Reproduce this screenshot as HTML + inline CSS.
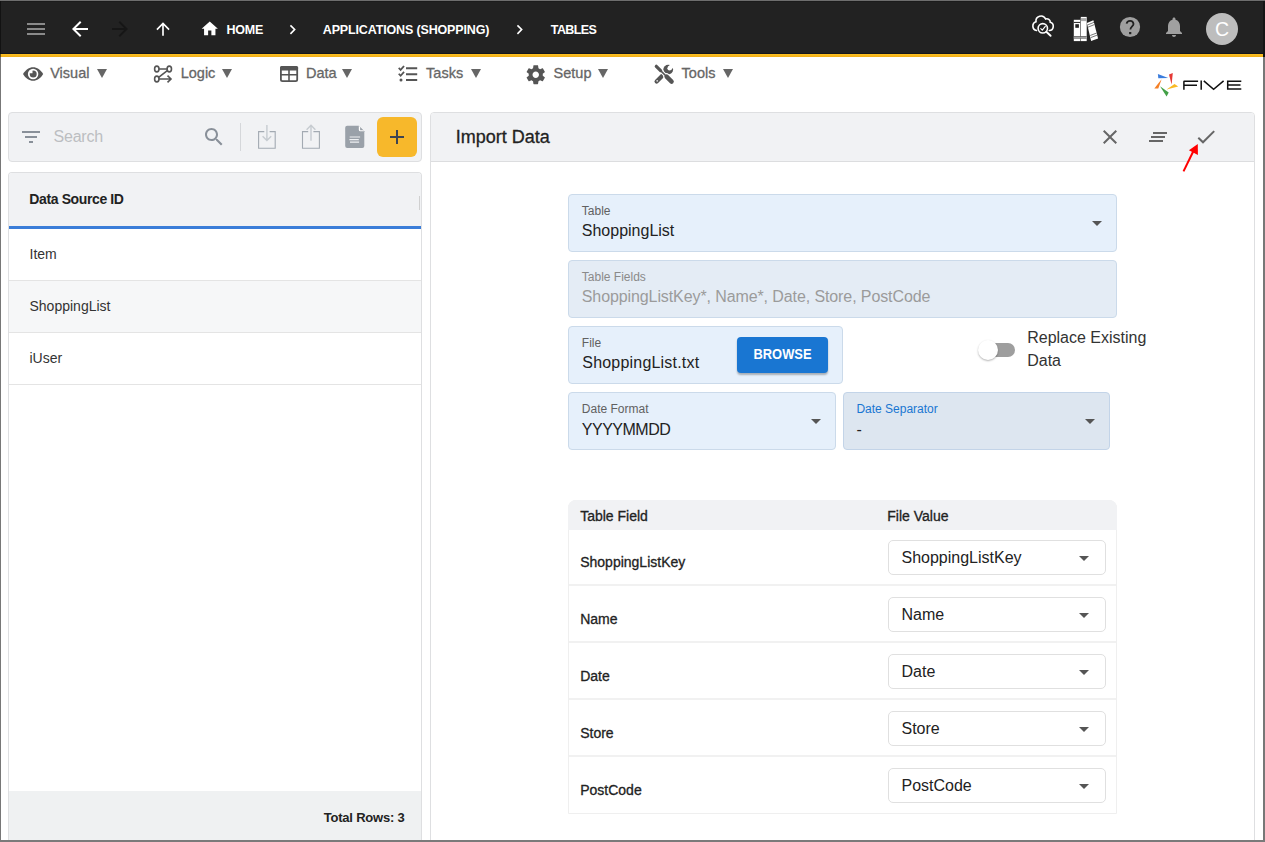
<!DOCTYPE html>
<html><head><meta charset="utf-8">
<style>
*{box-sizing:border-box;margin:0;padding:0}
html,body{width:1265px;height:842px;overflow:hidden;background:#fff}
body{position:relative;font-family:"Liberation Sans",sans-serif;color:#222}
.a{position:absolute}
.t{position:absolute;white-space:nowrap;line-height:1}
.m{-webkit-text-stroke:0.3px currentColor}
svg{position:absolute;overflow:visible}
</style></head><body>

<!-- ============ HEADER ============ -->
<div class="a" style="left:0;top:0;width:1265px;height:54px;background:#222"></div>
<div class="a" style="left:0;top:0;width:1265px;height:1px;background:#6e6e6e"></div>
<div class="a" style="left:0;top:1px;width:1265px;height:1px;background:#1c1c1c"></div>
<div class="a" style="left:0;top:53px;width:1265px;height:1px;background:#14171c"></div>
<div class="a" style="left:0;top:54px;width:1265px;height:3px;background:linear-gradient(#fec225,#f0ae17)"></div>

<!-- header icons -->
<svg style="left:24px;top:17px" width="24" height="24" viewBox="0 0 24 24"><path fill="#8a8a8a" d="M3 18h18v-2H3v2zm0-5h18v-2H3v2zm0-7v2h18V6H3z"/></svg>
<svg style="left:68px;top:17px" width="24" height="24" viewBox="0 0 24 24"><path fill="#fff" d="M20 11H7.83l5.59-5.59L12 4l-8 8 8 8 1.41-1.41L7.83 13H20v-2z"/></svg>
<svg style="left:108px;top:17px" width="24" height="24" viewBox="0 0 24 24"><path fill="#161616" d="M12 4l-1.41 1.41L16.17 11H4v2h12.17l-5.58 5.59L12 20l8-8z"/></svg>
<svg style="left:153px;top:19px" width="20" height="20" viewBox="0 0 24 24"><path fill="#fff" d="M4 12l1.41 1.41L11 7.83V20h2V7.83l5.58 5.59L20 12l-8-8-8 8z"/></svg>
<svg style="left:200.3px;top:19.1px" width="19.5" height="19.5" viewBox="0 0 24 24"><path fill="#fff" d="M10 20v-6h4v6h5v-8h3L12 3 2 12h3v8z"/></svg>
<div class="t" style="left:226.5px;top:24px;font-size:12.5px;font-weight:700;color:#fff;letter-spacing:-0.2px">HOME</div>
<svg style="left:283.1px;top:19.6px" width="19.2" height="19.2" viewBox="0 0 24 24"><path fill="#fff" d="M10 6L8.59 7.41 13.17 12l-4.58 4.59L10 18l6-6z"/></svg>
<div class="t" style="left:322.8px;top:24px;font-size:12.5px;font-weight:700;color:#fff;letter-spacing:-0.15px">APPLICATIONS (SHOPPING)</div>
<svg style="left:510.3px;top:19.6px" width="19.2" height="19.2" viewBox="0 0 24 24"><path fill="#fff" d="M10 6L8.59 7.41 13.17 12l-4.58 4.59L10 18l6-6z"/></svg>
<div class="t" style="left:550.8px;top:24px;font-size:12.5px;font-weight:700;color:#fff;letter-spacing:-0.6px">TABLES</div>

<!-- right header icons -->
<svg style="left:1028px;top:12px" width="30" height="30" viewBox="1028 12 30 30"><g fill="none" stroke="#fff" stroke-width="1.6" stroke-linecap="round"><path d="M1036.5 30.5A4.5 4.5 0 0 1 1036 21.8A5.05 5.05 0 0 1 1045.6 19A3.5 3.5 0 0 1 1050.3 22.3A4.2 4.2 0 0 1 1049.3 30.5"/><circle cx="1042.8" cy="28.3" r="4.7"/><path d="M1046.3 31.7L1050.6 35.8" stroke-width="1.9"/><path d="M1040.8 28.7L1042.3 30.2L1045.3 26.3" stroke-width="1.15"/></g></svg>
<svg style="left:1070px;top:12px" width="32" height="32" viewBox="1070 12 32 32">
<rect x="1073.8" y="19.8" width="6.5" height="21.3" fill="#fff"/>
<rect x="1073.8" y="21.9" width="6.5" height="1.1" fill="#333"/>
<rect x="1075.3" y="24.2" width="3.6" height="3.6" fill="#222"/>
<rect x="1080.8" y="16.9" width="5.9" height="24.2" fill="#fff"/>
<rect x="1080.8" y="18.1" width="5.9" height="3" fill="#aaa"/>
<rect x="1073.8" y="36" width="12.9" height="0.8" fill="#555"/>
<rect x="1073.8" y="37.1" width="12.9" height="1.1" fill="#999"/>
<rect x="1073.8" y="38.4" width="12.9" height="0.6" fill="#666"/>
<polygon points="1086.9,23 1093.4,20.2 1098.1,38.6 1091.1,40.9" fill="#fff"/>
<path d="M1087.5 25L1094 22.3M1088 27.2L1094.5 24.5M1090.2 35.5L1096.7 33M1090.7 37.6L1097.2 35.1" stroke="#555" stroke-width="0.8"/>
</svg>
<svg style="left:1115px;top:12px" width="30" height="30" viewBox="1115 12 30 30"><circle cx="1130" cy="27" r="10.1" fill="#a0a0a0"/><path d="M1126.6 23.6A3.5 3.5 0 0 1 1133.5 23.9C1133.5 26.2 1130.4 26.6 1130.4 29.6" fill="none" stroke="#222" stroke-width="1.8"/><rect x="1129.1" y="32" width="2.2" height="2.2" fill="#222"/></svg>
<svg style="left:1162px;top:14.5px" width="24" height="24" viewBox="0 0 24 24"><path fill="#a0a0a0" d="M12 22c1.1 0 2-.9 2-2h-4c0 1.1.89 2 2 2zm6-6v-5c0-3.07-1.64-5.64-4.5-6.32V4c0-.83-.67-1.5-1.5-1.5s-1.5.67-1.5 1.5v.68C7.630 5.36 6 7.92 6 11v5l-2 2v1h16v-1l-2-2z"/></svg>
<div class="a" style="left:1206px;top:13px;width:32px;height:32px;border-radius:50%;background:#bdbdbd"></div>
<div class="t" style="left:1206px;top:19.5px;width:32px;text-align:center;font-size:19.5px;color:#fff">C</div>

<!-- ============ NAV ============ -->
<svg style="left:1150px;top:68px" width="95" height="32" viewBox="1150 68 95 32">
<polygon points="1157.9,74.1 1158.3,78.3 1168.2,77.9" fill="#3b7ddd"/>
<polygon points="1169,74.5 1172.8,72.9 1171.6,84.5" fill="#e53935"/>
<polygon points="1166.6,89.5 1174.5,83.9 1178.2,86.4" fill="#f9b924"/>
<polygon points="1160,86.2 1168.7,92.4 1166.6,96.5" fill="#43a047"/>
<polygon points="1154.3,88.6 1161.6,79.3 1158.3,88.6" fill="#f57f25"/>
<g fill="none" stroke="#111" stroke-width="1.5">
<path d="M1198.1 81.2H1184.4Q1183.9 81.2 1183.9 81.8V89.7M1183.9 85.3H1197"/>
<path d="M1201.2 80.5V89.7"/>
<path d="M1203.8 80.9L1213.6 89.3L1223.6 80.9"/>
<path d="M1241.3 81.2H1227.7V89H1241.3M1227.7 85.1H1240.5"/>
</g>
</svg>

<svg style="left:18px;top:60px" width="30" height="28" viewBox="18 60 30 28"><path d="M23 74C25.6 69.6 29.2 67.2 33.1 67.2S40.6 69.6 43.2 74C40.6 78.4 37 80.8 33.1 80.8S25.6 78.4 23 74Z" fill="#555"/><circle cx="33.1" cy="74" r="5.2" fill="#fff"/><circle cx="33.2" cy="74.1" r="3.5" fill="#555"/><path d="M32.5 73.3H29.3A3.2 3.2 0 0 1 32.5 70.1Z" fill="#fff"/></svg>
<div class="t m" style="left:50.2px;top:65.5px;font-size:14.5px;color:#666">Visual</div>
<div class="a" style="left:97.2px;top:69.2px;width:0;height:0;border-left:5.1px solid transparent;border-right:5.1px solid transparent;border-top:9px solid #666"></div>

<svg style="left:148px;top:60px" width="30" height="28" viewBox="148 60 30 28"><g fill="none" stroke="#555" stroke-width="1.6"><ellipse cx="156.8" cy="69" rx="2.2" ry="2.9"/><ellipse cx="169.3" cy="69" rx="2.2" ry="2.9"/><ellipse cx="156.8" cy="79" rx="2.2" ry="2.9"/><path d="M159 69H167.1M167.3 70.6L158.6 77.4M159 79H171M167.5 75.6L171 79L167.5 82.4"/></g></svg>
<div class="t m" style="left:180.7px;top:65.5px;font-size:14.5px;color:#666">Logic</div>
<div class="a" style="left:222px;top:69.2px;width:0;height:0;border-left:5.1px solid transparent;border-right:5.1px solid transparent;border-top:9px solid #666"></div>

<svg style="left:275px;top:60px" width="30" height="28" viewBox="275 60 30 28"><rect x="280.9" y="66.9" width="16.3" height="14.2" rx="1.6" fill="none" stroke="#555" stroke-width="1.8"/><rect x="280" y="66" width="18.1" height="4.4" rx="1.6" fill="#555"/><path d="M289 69V81M280.5 74.8H297.6" stroke="#555" stroke-width="1.6"/></svg>
<div class="t m" style="left:306px;top:65.5px;font-size:14.5px;color:#666">Data</div>
<div class="a" style="left:341.5px;top:69.2px;width:0;height:0;border-left:5.1px solid transparent;border-right:5.1px solid transparent;border-top:9px solid #666"></div>

<svg style="left:394px;top:60px" width="30" height="28" viewBox="394 60 30 28"><g fill="none" stroke="#555" stroke-width="1.7" stroke-linecap="square"><path d="M399.3 68.5L400.6 69.9L403.5 66.6M399.3 74.4L400.6 75.8L403.5 72.5"/></g><circle cx="401" cy="80" r="1.5" fill="#555"/><path d="M406 68.3H417.2M406 74.2H417.2M406 80H417.2" stroke="#555" stroke-width="2"/></svg>
<div class="t m" style="left:426.1px;top:65.5px;font-size:14.5px;color:#666">Tasks</div>
<div class="a" style="left:470.5px;top:69.2px;width:0;height:0;border-left:5.1px solid transparent;border-right:5.1px solid transparent;border-top:9px solid #666"></div>

<svg style="left:524.4px;top:62.5px" width="23.5" height="23.5" viewBox="0 0 24 24"><path fill="#555" d="M19.14 12.94c.04-.3.06-.61.06-.94 0-.32-.02-.64-.07-.94l2.03-1.58c.18-.14.23-.41.12-.61l-1.92-3.32c-.12-.22-.37-.29-.59-.22l-2.39.96c-.5-.38-1.030-.7-1.62-.94l-.36-2.54c-.04-.24-.24-.41-.48-.41h-3.84c-.24 0-.43.17-.47.41l-.36 2.54c-.59.24-1.13.57-1.62.94l-2.39-.96c-.22-.08-.47 0-.59.22L2.74 8.87c-.12.21-.08.47.12.61l2.03 1.58c-.05.3-.09.63-.09.94s.02.64.07.94l-2.03 1.58c-.18.14-.23.41-.12.61l1.92 3.32c.12.22.37.29.59.22l2.39-.96c.5.38 1.03.7 1.62.94l.36 2.54c.05.24.24.41.48.41h3.84c.24 0 .44-.17.47-.41l.36-2.54c.59-.24 1.13-.56 1.62-.94l2.39.96c.22.08.47 0 .59-.22l1.92-3.32c.12-.22.07-.47-.12-.61l-2.01-1.58zM12 15.3c-1.82 0-3.3-1.48-3.3-3.3s1.48-3.3 3.3-3.3 3.3 1.48 3.3 3.3-1.48 3.3-3.3 3.3z"/></svg>
<div class="t m" style="left:553.6px;top:65.5px;font-size:14.5px;color:#666">Setup</div>
<div class="a" style="left:597.7px;top:69.2px;width:0;height:0;border-left:5.1px solid transparent;border-right:5.1px solid transparent;border-top:9px solid #666"></div>

<svg style="left:648px;top:58px" width="30" height="30" viewBox="648 58 30 30">
<path d="M656.6 81.4L665.5 72.5" stroke="#555" stroke-width="4.2" stroke-linecap="round"/>
<circle cx="668.2" cy="69.6" r="4.9" fill="#555"/>
<circle cx="669.6" cy="68.2" r="2.2" fill="#fff"/>
<path d="M669.6 68.2L675 62.8" stroke="#fff" stroke-width="4.4"/>
<circle cx="657.2" cy="80.8" r="0.9" fill="#ddd"/>
<g stroke="#fff" stroke-linecap="round"><path d="M656.3 66.3L660.6 70.6" stroke-width="5.4"/><path d="M660.6 70.6L666.5 76.5" stroke-width="3.8"/><path d="M666.6 76.6L671.6 81.6" stroke-width="6.6"/></g>
<g stroke="#555" stroke-linecap="round"><path d="M656.3 66.3L660.6 70.6" stroke-width="3.2"/><path d="M660.6 70.6L666.5 76.5" stroke-width="1.6"/><path d="M666.6 76.6L671.6 81.6" stroke-width="4.4"/></g>
</svg>
<div class="t m" style="left:681.6px;top:65.5px;font-size:14.5px;color:#666">Tools</div>
<div class="a" style="left:722.9px;top:69.2px;width:0;height:0;border-left:5.1px solid transparent;border-right:5.1px solid transparent;border-top:9px solid #666"></div>

<!-- ============ LEFT PANEL ============ -->
<div class="a" style="left:8px;top:112px;width:414px;height:50px;background:#f1f2f4;border:1px solid #dedfe1;border-radius:4px"></div>
<div class="a" style="left:22px;top:131px;width:18px;height:2px;background:#899099"></div>
<div class="a" style="left:25px;top:136px;width:12px;height:2px;background:#899099"></div>
<div class="a" style="left:29px;top:141px;width:4px;height:2px;background:#899099"></div>
<div class="t" style="left:53.6px;top:129.3px;font-size:16px;color:#bcbec1;letter-spacing:-0.25px">Search</div>
<svg style="left:202px;top:125.2px" width="24" height="24" viewBox="0 0 24 24"><path fill="#899099" d="M15.5 14h-.79l-.28-.27C15.41 12.59 16 11.11 16 9.5 16 5.91 13.09 3 9.5 3S3 5.910 3 9.5 5.91 16 9.5 16c1.61 0 3.09-.59 4.23-1.57l.27.28v.79l5 4.99L20.49 19l-4.99-5zm-6 0C7.01 14 5 11.99 5 9.5S7.01 5 9.5 5 14 7.01 14 9.5 11.99 14 9.5 14z"/></svg>
<div class="a" style="left:240px;top:123px;width:1px;height:28px;background:#d5d7da"></div>
<svg style="left:252px;top:120px" width="74" height="34" viewBox="252 120 74 34"><g fill="none" stroke-width="1.1">
<path d="M264.3 131.6H258.6V148.3H275.2V131.6H269.6" stroke="#a3aab2"/>
<path d="M266.9 125V140.4M262.6 136.2L266.9 140.6L271.2 136.2" stroke="#c6cbd0" stroke-width="1.4"/>
<path d="M308.2 131.6H302.5V148.3H319.4V131.6H313.4" stroke="#a3aab2"/>
<path d="M311 125.6V140.8M306.6 129.7L311 125.3L315.4 129.7" stroke="#c6cbd0" stroke-width="1.4"/>
</g></svg>
<svg style="left:340px;top:114px" width="30" height="40" viewBox="340 114 30 40">
<path d="M347.2 125.7H358.8L364.3 131.2V146Q364.3 148 362.3 148H347.2Q345.2 148 345.2 146V127.7Q345.2 125.7 347.2 125.7Z" fill="#9aa1a9"/>
<path d="M358.8 125.7L364.3 131.2H360.3Q358.8 131.2 358.8 129.7Z" fill="#fff"/>
<path d="M360.1 126.9L363.4 130.2H360.1Z" fill="#9aa1a9"/>
<path d="M349.7 137H360.1M349.4 139.6H358.8M350 142.2H359.1" stroke="#eef0f2" stroke-width="1.2"/>
</svg>
<div class="a" style="left:377px;top:117px;width:40px;height:40px;background:#f7b82b;border-radius:6px"></div>
<div class="a" style="left:390px;top:136px;width:14px;height:2px;background:#3d4451"></div>
<div class="a" style="left:396px;top:130px;width:2px;height:14px;background:#3d4451"></div>

<!-- list -->
<div class="a" style="left:8px;top:172px;width:414px;height:668px;border:1px solid #dedfe1;border-bottom:none;border-radius:4px 4px 0 0;background:#fff"></div>
<div class="a" style="left:9px;top:173px;width:412px;height:53px;background:#f1f2f4;border-radius:3px 3px 0 0"></div>
<div class="a" style="left:419px;top:196px;width:1px;height:14px;background:#d0d0d0"></div>
<div class="a" style="left:9px;top:226px;width:412px;height:3px;background:#3b7dd8"></div>
<div class="t" style="left:29.3px;top:192.2px;font-size:14px;font-weight:700;color:#222;letter-spacing:-0.38px">Data Source ID</div>
<div class="a" style="left:9px;top:280px;width:412px;height:1px;background:#e4e4e4"></div>
<div class="a" style="left:9px;top:281px;width:412px;height:51px;background:#f6f7f8"></div>
<div class="a" style="left:9px;top:332px;width:412px;height:1px;background:#e4e4e4"></div>
<div class="a" style="left:9px;top:384px;width:412px;height:1px;background:#e4e4e4"></div>
<div class="t" style="left:29.5px;top:247.1px;font-size:14px;color:#333">Item</div>
<div class="t" style="left:29.5px;top:299.1px;font-size:14px;color:#333">ShoppingList</div>
<div class="t" style="left:29.5px;top:351.1px;font-size:14px;color:#333">iUser</div>
<div class="a" style="left:9px;top:791px;width:412px;height:49px;background:#eff1f2"></div>
<div class="t" style="left:304.6px;top:810.8px;width:100px;text-align:right;font-size:13px;font-weight:700;color:#222;letter-spacing:-0.2px">Total Rows: 3</div>

<!-- ============ RIGHT PANEL ============ -->
<div class="a" style="left:430px;top:112px;width:825px;height:740px;border:1px solid #dedfe1;border-radius:4px;background:#fff"></div>
<div class="a" style="left:431px;top:113px;width:823px;height:48px;background:#f1f2f4;border-radius:3px 3px 0 0"></div>
<div class="a" style="left:431px;top:161px;width:823px;height:1px;background:#dcdddf"></div>
<div class="t m" style="left:455.8px;top:128px;font-size:18px;color:#222">Import Data</div>
<svg style="left:1098px;top:125px" width="24" height="24" viewBox="0 0 24 24"><path fill="#666" d="M19 6.41L17.59 5 12 10.59 6.41 5 5 6.41 10.59 12 5 17.59 6.41 19 12 13.41 17.59 19 19 17.590 13.41 12z"/></svg>
<div class="a" style="left:1153px;top:132px;width:14px;height:2px;background:#666"></div>
<div class="a" style="left:1151px;top:136px;width:14px;height:2px;background:#666"></div>
<div class="a" style="left:1149px;top:140px;width:14px;height:2px;background:#666"></div>
<svg style="left:1180px;top:125px" width="40" height="50" viewBox="1180 125 40 50">
<path d="M1198.3 137.7L1203 142.3L1214.2 131.1" fill="none" stroke="#666" stroke-width="2"/>
<path d="M1183.5 171.4L1193.2 151.5" stroke="#f00" stroke-width="2" fill="none"/>
<polygon points="1197.8,144 1188.9,150.3 1197.9,155" fill="#f00"/>
</svg>

<!-- form -->
<div class="a" style="left:568px;top:194px;width:549px;height:58px;background:#e6f0fb;border:1px solid #cbdaea;border-radius:4px"></div>
<div class="t" style="left:581.8px;top:204.9px;font-size:12px;color:#616161">Table</div>
<div class="t" style="left:581.8px;top:223.2px;font-size:16px;color:#222">ShoppingList</div>
<div class="a" style="left:1092px;top:221px;width:0;height:0;border-left:5px solid transparent;border-right:5px solid transparent;border-top:5px solid #555"></div>

<div class="a" style="left:568px;top:260px;width:549px;height:58px;background:#e4ecf5;border:1px solid #cbdaea;border-radius:4px"></div>
<div class="t" style="left:581.8px;top:270.9px;font-size:12px;color:#8a8a8a">Table Fields</div>
<div class="t" style="left:581.8px;top:289.1px;font-size:16px;color:#9b9b9b;letter-spacing:-0.1px">ShoppingListKey*, Name*, Date, Store, PostCode</div>

<div class="a" style="left:568px;top:326px;width:275px;height:58px;background:#e6f0fb;border:1px solid #cbdaea;border-radius:4px"></div>
<div class="t" style="left:581.8px;top:337.1px;font-size:12px;color:#616161">File</div>
<div class="t" style="left:582.3px;top:354.6px;font-size:16px;color:#222;letter-spacing:0.2px">ShoppingList.txt</div>
<div class="a" style="left:737px;top:337px;width:91px;height:36px;background:#1976d2;border-radius:4px;box-shadow:0 2px 2px rgba(0,0,0,.28)"></div>
<div class="t" style="left:737px;top:347.3px;width:91px;text-align:center;font-size:14px;font-weight:700;color:#fff;transform:scaleX(0.92)">BROWSE</div>

<div class="a" style="left:981px;top:343.2px;width:34px;height:13.6px;border-radius:7px;background:#9e9e9e"></div>
<div class="a" style="left:977.6px;top:340px;width:20.2px;height:20.2px;border-radius:50%;background:#fff;box-shadow:0 1px 2px rgba(0,0,0,.3)"></div>
<div class="t" style="left:1027.2px;top:330px;font-size:16px;color:#333">Replace Existing</div>
<div class="t" style="left:1027.2px;top:353.3px;font-size:16px;color:#333">Data</div>

<div class="a" style="left:568px;top:392px;width:268px;height:58px;background:#e6f0fb;border:1px solid #cbdaea;border-radius:4px"></div>
<div class="t" style="left:581.8px;top:402.8px;font-size:12px;color:#616161">Date Format</div>
<div class="t" style="left:581.8px;top:421.5px;font-size:16px;color:#222;letter-spacing:-0.5px">YYYYMMDD</div>
<div class="a" style="left:811px;top:419px;width:0;height:0;border-left:5px solid transparent;border-right:5px solid transparent;border-top:5px solid #555"></div>

<div class="a" style="left:843px;top:392px;width:267px;height:58px;background:#dde6f0;border:1px solid #c3d4e8;border-radius:4px"></div>
<div class="t" style="left:856.4px;top:402.9px;font-size:12px;color:#1976d2">Date Separator</div>
<div class="t" style="left:856.4px;top:421.5px;font-size:16px;color:#222">-</div>
<div class="a" style="left:1085px;top:419px;width:0;height:0;border-left:5px solid transparent;border-right:5px solid transparent;border-top:5px solid #555"></div>

<!-- mapping table -->
<div class="a" style="left:568px;top:500px;width:549px;height:314px;border:1px solid #efefef;border-radius:8px 8px 0 0"></div>
<div class="a" style="left:568px;top:500px;width:549px;height:29.5px;background:#f1f2f4;border-radius:8px 8px 0 0"></div>
<div class="t m" style="left:580.2px;top:509px;font-size:14px;color:#222">Table Field</div>
<div class="t m" style="left:887.3px;top:509px;font-size:14px;color:#222">File Value</div>

<div class="t m" style="left:580.2px;top:555.2px;font-size:14px;color:#222">ShoppingListKey</div>
<div class="a" style="left:888px;top:540px;width:218px;height:35px;border:1px solid #e0e0e0;border-radius:5px;background:#fff"></div>
<div class="t" style="left:901.5px;top:549.5px;font-size:16px;color:#222">ShoppingListKey</div>
<div class="a" style="left:1079px;top:556px;width:0;height:0;border-left:5px solid transparent;border-right:5px solid transparent;border-top:5px solid #555"></div>
<div class="a" style="left:569px;top:584px;width:547px;height:2px;background:#f1f1f1"></div>
<div class="t m" style="left:580.2px;top:612.2px;font-size:14px;color:#222">Name</div>
<div class="a" style="left:888px;top:597px;width:218px;height:35px;border:1px solid #e0e0e0;border-radius:5px;background:#fff"></div>
<div class="t" style="left:901.5px;top:606.5px;font-size:16px;color:#222">Name</div>
<div class="a" style="left:1079px;top:613px;width:0;height:0;border-left:5px solid transparent;border-right:5px solid transparent;border-top:5px solid #555"></div>
<div class="a" style="left:569px;top:641px;width:547px;height:2px;background:#f1f1f1"></div>
<div class="t m" style="left:580.2px;top:669.2px;font-size:14px;color:#222">Date</div>
<div class="a" style="left:888px;top:654px;width:218px;height:35px;border:1px solid #e0e0e0;border-radius:5px;background:#fff"></div>
<div class="t" style="left:901.5px;top:663.5px;font-size:16px;color:#222">Date</div>
<div class="a" style="left:1079px;top:670px;width:0;height:0;border-left:5px solid transparent;border-right:5px solid transparent;border-top:5px solid #555"></div>
<div class="a" style="left:569px;top:698px;width:547px;height:2px;background:#f1f1f1"></div>
<div class="t m" style="left:580.2px;top:726.2px;font-size:14px;color:#222">Store</div>
<div class="a" style="left:888px;top:711px;width:218px;height:35px;border:1px solid #e0e0e0;border-radius:5px;background:#fff"></div>
<div class="t" style="left:901.5px;top:720.5px;font-size:16px;color:#222">Store</div>
<div class="a" style="left:1079px;top:727px;width:0;height:0;border-left:5px solid transparent;border-right:5px solid transparent;border-top:5px solid #555"></div>
<div class="a" style="left:569px;top:755px;width:547px;height:2px;background:#f1f1f1"></div>
<div class="t m" style="left:580.2px;top:783.2px;font-size:14px;color:#222">PostCode</div>
<div class="a" style="left:888px;top:768px;width:218px;height:35px;border:1px solid #e0e0e0;border-radius:5px;background:#fff"></div>
<div class="t" style="left:901.5px;top:777.5px;font-size:16px;color:#222">PostCode</div>
<div class="a" style="left:1079px;top:784px;width:0;height:0;border-left:5px solid transparent;border-right:5px solid transparent;border-top:5px solid #555"></div>



<!-- frame borders -->
<div class="a" style="left:0;top:1px;width:1px;height:53px;background:#121212"></div>
<div class="a" style="left:0;top:54px;width:1px;height:3px;background:#6b5214"></div>
<div class="a" style="left:0;top:57px;width:1px;height:785px;background:#777"></div>
<div class="a" style="left:1263px;top:1px;width:2px;height:56px;background:#151515"></div>
<div class="a" style="left:1263px;top:57px;width:2px;height:785px;background:#777"></div>
<div class="a" style="left:0;top:840px;width:1265px;height:2px;background:#7a7a7a"></div>
</body></html>
